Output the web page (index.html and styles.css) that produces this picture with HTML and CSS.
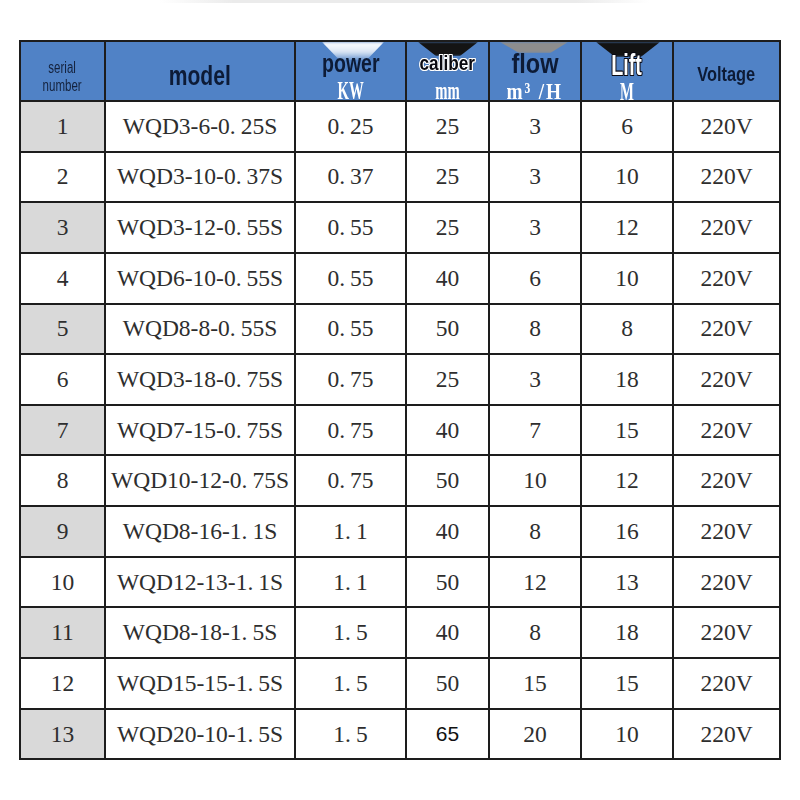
FILE: index.html
```html
<!DOCTYPE html>
<html>
<head>
<meta charset="utf-8">
<link rel="stylesheet" href="styles.css">
</head>
<body>
<div class="page">
  <div class="topline"></div>
  <table class="spec">
    <colgroup>
      <col class="c1"><col class="c2"><col class="c3"><col class="c4"><col class="c5"><col class="c6"><col class="c7">
    </colgroup>
    <thead>
      <tr>
        <th class="h-serial"><span class="lbl serial">serial<br>number</span></th>
        <th class="h-model"><span class="lbl model">model</span></th>
        <th class="two">
          <span class="deco deco-power"></span>
          <div class="stack">
            <span class="lbl power">power</span>
            <span class="unit">KW</span>
          </div>
        </th>
        <th class="two">
          <span class="deco deco-caliber"></span>
          <div class="stack">
            <span class="lbl caliber">caliber</span>
            <span class="unit">mm</span>
          </div>
        </th>
        <th class="two">
          <span class="deco deco-flow"></span>
          <div class="stack">
            <span class="lbl flow">flow</span>
            <span class="unit unit-flow">m³ /H</span>
          </div>
        </th>
        <th class="two">
          <span class="deco deco-lift"></span>
          <div class="stack">
            <span class="lbl lift">Lift</span>
            <span class="unit unit-lift">M</span>
          </div>
        </th>
        <th class="h-volt"><span class="lbl volt">Voltage</span></th>
      </tr>
    </thead>
    <tbody>
      <tr><td class="sn grey">1</td><td>WQD3-6-0<span class="dot">.</span>25S</td><td>0<span class="dot">.</span>25</td><td>25</td><td>3</td><td>6</td><td>220V</td></tr>
      <tr><td class="sn">2</td><td>WQD3-10-0<span class="dot">.</span>37S</td><td>0<span class="dot">.</span>37</td><td>25</td><td>3</td><td>10</td><td>220V</td></tr>
      <tr><td class="sn grey">3</td><td>WQD3-12-0<span class="dot">.</span>55S</td><td>0<span class="dot">.</span>55</td><td>25</td><td>3</td><td>12</td><td>220V</td></tr>
      <tr><td class="sn">4</td><td>WQD6-10-0<span class="dot">.</span>55S</td><td>0<span class="dot">.</span>55</td><td>40</td><td>6</td><td>10</td><td>220V</td></tr>
      <tr><td class="sn grey">5</td><td>WQD8-8-0<span class="dot">.</span>55S</td><td>0<span class="dot">.</span>55</td><td>50</td><td>8</td><td>8</td><td>220V</td></tr>
      <tr><td class="sn">6</td><td>WQD3-18-0<span class="dot">.</span>75S</td><td>0<span class="dot">.</span>75</td><td>25</td><td>3</td><td>18</td><td>220V</td></tr>
      <tr><td class="sn grey">7</td><td>WQD7-15-0<span class="dot">.</span>75S</td><td>0<span class="dot">.</span>75</td><td>40</td><td>7</td><td>15</td><td>220V</td></tr>
      <tr><td class="sn">8</td><td>WQD10-12-0<span class="dot">.</span>75S</td><td>0<span class="dot">.</span>75</td><td>50</td><td>10</td><td>12</td><td>220V</td></tr>
      <tr><td class="sn grey">9</td><td>WQD8-16-1<span class="dot">.</span>1S</td><td>1<span class="dot">.</span>1</td><td>40</td><td>8</td><td>16</td><td>220V</td></tr>
      <tr><td class="sn">10</td><td>WQD12-13-1<span class="dot">.</span>1S</td><td>1<span class="dot">.</span>1</td><td>50</td><td>12</td><td>13</td><td>220V</td></tr>
      <tr><td class="sn grey">11</td><td>WQD8-18-1<span class="dot">.</span>5S</td><td>1<span class="dot">.</span>5</td><td>40</td><td>8</td><td>18</td><td>220V</td></tr>
      <tr><td class="sn">12</td><td>WQD15-15-1<span class="dot">.</span>5S</td><td>1<span class="dot">.</span>5</td><td>50</td><td>15</td><td>15</td><td>220V</td></tr>
      <tr><td class="sn grey">13</td><td>WQD20-10-1<span class="dot">.</span>5S</td><td>1<span class="dot">.</span>5</td><td class="sans">65</td><td>20</td><td>10</td><td>220V</td></tr>
    </tbody>
  </table>
</div>
</body>
</html>
```
FILE: styles.css
```css
html, body {
  margin: 0;
  padding: 0;
  background: #ffffff;
}

.page {
  width: 800px;
  height: 800px;
  overflow: hidden;
}

.topline {
  height: 3px;
  margin: 0 150px 0 160px;
  background: linear-gradient(90deg, rgba(225,225,225,0), #ebebeb 15%, #ebebeb 85%, rgba(225,225,225,0));
}

.spec {
  margin: 37px 0 0 19px;
  width: 762px;
  border-collapse: collapse;
  table-layout: fixed;
}

.c1 { width: 85px; }
.c2 { width: 190px; }
.c3 { width: 111px; }
.c4 { width: 83px; }
.c5 { width: 92px; }
.c6 { width: 92px; }
.c7 { width: 107px; }

.spec th,
.spec td {
  border: 2px solid #1d1d1d;
  padding: 0;
  text-align: center;
}

.spec thead tr { height: 60px; }
.spec tbody tr { height: 50.65px; }

.spec th {
  background: #5082c6;
  position: relative;
  vertical-align: middle;
}

.spec th.two { vertical-align: top; }

.stack {
  position: relative;
  z-index: 1;
  display: flex;
  flex-direction: column;
  align-items: center;
  padding-top: 7px;
  height: 51px;
}

.lbl {
  display: inline-block;
  font-family: "Liberation Sans", Arial, sans-serif;
  font-weight: bold;
  color: #0d1b36;
  line-height: 1;
  white-space: nowrap;
}

.serial {
  font-weight: normal;
  font-size: 16px;
  line-height: 18px;
  transform: scaleX(0.72);
  color: #14223d;
}
.h-serial { padding-top: 11px !important; }

.model {
  font-size: 27px;
  transform: scaleX(0.78);
}
.h-model { padding-top: 11px !important; }

.volt {
  font-size: 21px;
  transform: scaleX(0.78);
}
.h-volt { padding-top: 5px !important; }

.power {
  font-size: 25px;
  line-height: 28px;
  height: 28px;
  transform: scaleX(0.78);
}

.caliber {
  font-size: 20px;
  line-height: 28px;
  height: 28px;
  color: #0b0b12;
  transform: scaleX(0.86);
  text-shadow:
    1px 0 0 #fff, -1px 0 0 #fff, 0 1px 0 #fff, 0 -1px 0 #fff,
    1px 1px 0 #fff, -1px -1px 0 #fff, 1px -1px 0 #fff, -1px 1px 0 #fff,
    0 0 2px #111;
}

.flow {
  font-size: 28px;
  line-height: 28px;
  height: 28px;
  margin-top: 1px;
  transform: scaleX(0.84);
}

.lift {
  font-size: 29px;
  line-height: 26px;
  height: 26px;
  margin-top: 3px;
  color: #ffffff;
  transform: scaleX(0.68);
  text-shadow:
    1px 0 0 #0a0a14, -1px 0 0 #0a0a14, 0 1px 0 #0a0a14, 0 -1px 0 #0a0a14,
    1px 1px 0 #0a0a14, -1px -1px 0 #0a0a14, 1px -1px 0 #0a0a14, -1px 1px 0 #0a0a14;
}

.unit {
  display: inline-block;
  margin-top: 4px;
  font-family: "Liberation Serif", "Times New Roman", serif;
  font-weight: bold;
  font-size: 21px;
  line-height: 20px;
  height: 20px;
  color: #ffffff;
  transform: scale(0.7, 1.15);
  white-space: nowrap;
}
.unit-flow {
  margin-top: 3px;
  letter-spacing: 2px;
  transform: scale(0.92, 1.1);
}
.unit-lift { margin-top: 4px; }

.deco {
  position: absolute;
  top: 0;
  z-index: 0;
}

.deco-power {
  left: 26px;
  width: 62px;
  height: 18px;
  background: linear-gradient(#ffffff, rgba(255,255,255,0.8) 55%, rgba(230,238,250,0.2));
  clip-path: polygon(0 0, 100% 0, 72% 100%, 28% 100%);
  filter: blur(1.5px);
}

.deco-caliber {
  left: 11px;
  width: 60px;
  height: 14px;
  background: #141414;
  clip-path: polygon(0 0, 100% 0, 70% 100%, 30% 100%);
  filter: blur(1px);
}

.deco-flow {
  left: 10px;
  width: 68px;
  height: 11px;
  background: #8d8d8d;
  clip-path: polygon(0 0, 100% 0, 74% 100%, 28% 100%);
  filter: blur(0.8px);
}

.deco-lift {
  left: 14px;
  width: 64px;
  height: 15px;
  background: #131313;
  clip-path: polygon(0 0, 100% 0, 70% 100%, 30% 100%);
  filter: blur(1px);
}

.spec td {
  font-family: "Liberation Serif", "Times New Roman", serif;
  font-size: 23.5px;
  color: #2e2e2e;
  vertical-align: middle;
  background: #ffffff;
  white-space: nowrap;
}

.spec td.grey { background: #d9d9d9; }

.dot { margin-right: 5px; }

.spec td.sans {
  font-family: "Liberation Sans", Arial, sans-serif;
  font-size: 21px;
  color: #111111;
}
```
